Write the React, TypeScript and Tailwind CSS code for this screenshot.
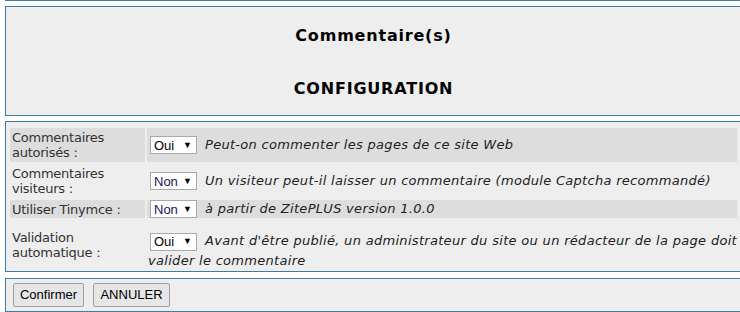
import React from "react";

const Select = ({ value, purple, extra }: { value: string; purple?: boolean; extra?: string }) => (
  <span
    className={`inline-flex items-center align-middle not-italic tracking-normal h-[18px] w-[47px] mr-[8px] border border-[#a9a9a9] bg-white pl-[3px] pr-[4px] font-['Liberation_Sans',Arial,sans-serif] text-[13px] leading-none ${extra ?? ""}`}
  >
    <span className={purple ? "text-[#1d1260]" : "text-black"}>{value}</span>
    <span className="ml-auto text-[9px] text-black">▼</span>
  </span>
);

const rows = [
  {
    label: ["Commentaires", "autorisés :"],
    value: "Oui",
    desc: "Peut-on commenter les pages de ce site Web",
    dark: true,
    h: "h-[34px]",
  },
  {
    label: ["Commentaires", "visiteurs :"],
    value: "Non",
    desc: "Un visiteur peut-il laisser un commentaire (module Captcha recommandé)",
    dark: false,
    h: "h-[34px]",
  },
  {
    label: ["Utiliser Tinymce :"],
    value: "Non",
    desc: "à partir de ZitePLUS version 1.0.0",
    dark: true,
    h: "h-[18px]",
  },
  {
    label: ["Validation", "automatique :"],
    value: "Oui",
    desc: "Avant d'être publié, un administrateur du site ou un rédacteur de la page doit valider le commentaire",
    dark: false,
    h: "h-[50px]",
  },
];

export default function App() {
  return (
    <div className="w-[740px] h-[312px] overflow-hidden bg-white font-['DejaVu_Sans',Verdana,sans-serif] text-[#222]">
      <div className="ml-[5px] w-[737px] h-px bg-[#3d7ca3]" />
      <div className="ml-[5px] mt-[5px] w-[737px] h-[110px] border border-[#3d7ca3] bg-[#eeeeee] flex flex-col items-center">
        <div className="mt-[19px] text-[16px] tracking-[0.8px] font-bold text-black leading-[20px]">Commentaire(s)</div>
        <div className="mt-[33px] text-[16px] tracking-[0.8px] font-bold text-black leading-[20px]">CONFIGURATION</div>
      </div>
      <div className="ml-[5px] mt-[5px] w-[737px] border border-[#3d7ca3] bg-[#eeeeee] px-[4px] pt-[6px] pb-[1px] flex flex-col gap-[2px]">
        {rows.map((r, i) => (
          <div key={i} className={`flex gap-[2px] ${r.h}`}>
            <div
              className={`w-[135px] shrink-0 px-[2px] text-[13px] tracking-[-0.25px] leading-[15px] text-[#333] flex flex-col justify-center ${
                r.dark ? "bg-[#dddddd]" : "bg-[#eeeeee]"
              }`}
            >
              {r.label.map((l, j) => (
                <span key={j}>{l}</span>
              ))}
            </div>
            <div
              className={`flex-1 text-[13px] tracking-[0.3px] italic text-justify flex ${
                r.dark ? "bg-[#dddddd]" : "bg-[#eeeeee]"
              } ${i === 3 ? "items-start pt-[11px] leading-[20px] pl-[1px]" : "items-center leading-[16px] pl-[3px]"}`}
            >
              <div>
                <Select value={r.value} purple={r.value === "Non"} extra={i === 3 ? "ml-[2px]" : ""} />
                {r.desc}
              </div>
            </div>
          </div>
        ))}
      </div>
      <div className="ml-[5px] mt-[6px] w-[737px] h-[34px] border border-[#3d7ca3] bg-[#eeeeee] flex items-start gap-[9px] pl-[7px] pt-[4px]">
        <button className="h-[24px] w-[71px] border border-[#a0a0a0] rounded-[2px] bg-[#e6e6e6] font-['Liberation_Sans',Arial,sans-serif] text-[13px] text-black">
          Confirmer
        </button>
        <button className="h-[24px] w-[77px] border border-[#a0a0a0] rounded-[2px] bg-[#e6e6e6] font-['Liberation_Sans',Arial,sans-serif] text-[13px] text-black">
          ANNULER
        </button>
      </div>
    </div>
  );
}
